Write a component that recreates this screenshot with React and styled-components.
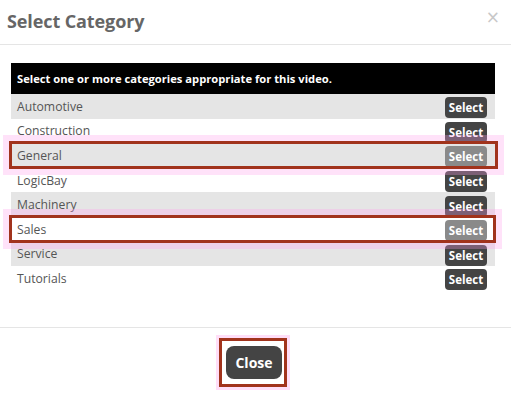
import styled, { createGlobalStyle } from "styled-components"

const GlobalStyle = createGlobalStyle`
    html, body {
        margin: 0;
        padding: 0;
        background: #fff;
    }
    body {
        font-family: "Open Sans", "Liberation Sans", sans-serif;
    }
`

const Modal = styled.div`
    width: 511px;
    height: 397px;
    background: #fff;
    display: flex;
    flex-direction: column;
    overflow: hidden;
`

const Header = styled.div`
    height: 45px;
    box-sizing: border-box;
    border-bottom: 1px solid #e5e5e5;
    display: flex;
    align-items: center;
    justify-content: space-between;
    padding: 0 11px 2px 7px;
`

const Title = styled.h4`
    margin: 0;
    font-size: 18px;
    font-weight: 700;
    color: #666;
    letter-spacing: -0.1px;
`

const CloseX = styled.span`
    font-size: 17px;
    line-height: 1;
    color: #c8c8c8;
    font-family: "DejaVu Sans", sans-serif;
    margin-top: -8px;
`

const Body = styled.div`
    height: 283px;
    box-sizing: border-box;
    padding: 18px 16px 0 11px;
    border-bottom: 1px solid #e5e5e5;
`

const TableHead = styled.div`
    height: 31px;
    background: #000;
    color: #fff;
    font-size: 11.2px;
    font-weight: 700;
    display: flex;
    align-items: center;
    padding: 0 6px;
`

const Row = styled.div`
    position: relative;
    height: 24.6px;
    display: flex;
    align-items: center;
    justify-content: space-between;
    padding: 0 8px 0 6px;
    background: ${props => props.$striped ? "#e5e5e5" : "#fff"};
    color: #555;
    font-size: 12.2px;
`

const SelectButton = styled.button`
    width: 42px;
    height: 21px;
    border: none;
    border-radius: 4px;
    background: ${props => props.$chosen ? "#8a8a8a" : "#444"};
    color: #fff;
    font-family: inherit;
    font-size: 11.5px;
    font-weight: 700;
    padding: 0;
    margin-top: 3px;
`

const Highlight = styled.div`
    position: absolute;
    left: -2px;
    right: ${props => props.$right}px;
    top: -2px;
    bottom: -1px;
    border: 3px solid #a1331c;
    box-shadow: 0 0 0 6px rgba(255, 160, 235, 0.3);
    pointer-events: none;
    z-index: 2;
`

const Footer = styled.div`
    flex: 1;
    display: flex;
    justify-content: center;
    align-items: flex-start;
    padding-top: 10px;
`

const CloseWrap = styled.div`
    position: relative;
    padding: 5px 2px 5px 4px;
    margin-right: 5px;
    border: 3px solid #a1331c;
    box-shadow: 0 0 0 3px rgba(255, 160, 235, 0.35);
`

const CloseButton = styled.button`
    width: 56px;
    height: 33px;
    border: none;
    border-radius: 8px;
    background: #444;
    color: #fff;
    font-family: inherit;
    font-size: 14px;
    font-weight: 700;
    padding: 0;
    display: block;
`

const categories = [
    { name: "Automotive" },
    { name: "Construction" },
    { name: "General", chosen: true, right: -3 },
    { name: "LogicBay" },
    { name: "Machinery" },
    { name: "Sales", chosen: true, right: -1 },
    { name: "Service" },
    { name: "Tutorials" },
]

const App = () => {
    return (
        <>
            <GlobalStyle />
            <Modal>
                <Header>
                    <Title>Select Category</Title>
                    <CloseX>×</CloseX>
                </Header>
                <Body>
                    <TableHead>Select one or more categories appropriate for this video.</TableHead>
                    {categories.map((cat, index) => (
                        <Row key={cat.name} $striped={index % 2 === 0}>
                            <span>{cat.name}</span>
                            <SelectButton $chosen={cat.chosen}>Select</SelectButton>
                            {cat.chosen && <Highlight $right={cat.right} />}
                        </Row>
                    ))}
                </Body>
                <Footer>
                    <CloseWrap>
                        <CloseButton>Close</CloseButton>
                    </CloseWrap>
                </Footer>
            </Modal>
        </>
    )
}

export default App
